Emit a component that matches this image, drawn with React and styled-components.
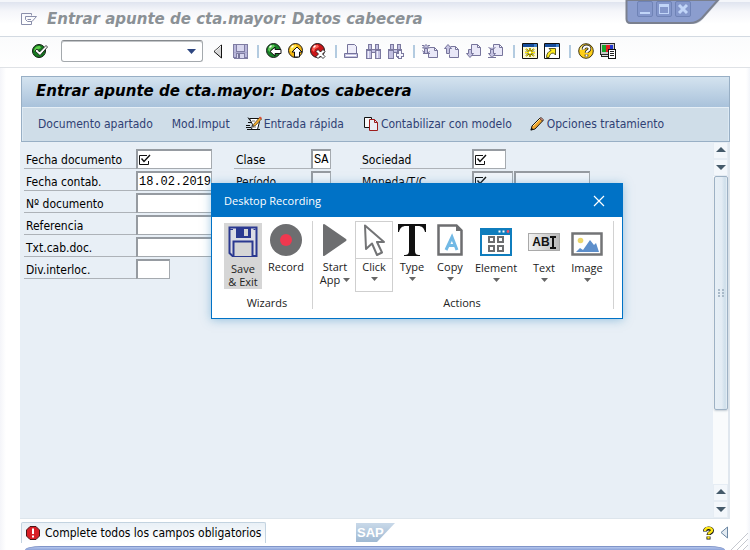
import React from "react";
import styled, { createGlobalStyle } from "styled-components";

const sapFont = '"DejaVu Sans Condensed", "DejaVu Sans", sans-serif';
const dialogFont = '"Open Sans", "Noto Sans", sans-serif';

const GlobalStyle = createGlobalStyle`
  *, *::before, *::after { box-sizing: border-box; }
  body { margin: 0; background: #fdfdfe; color: #000; font: 12px/16px ${sapFont}; }
  button, input { font: inherit; color: inherit; margin: 0; }
  svg { display: block; flex: none; }
  h1, h2, h3 { margin: 0; }
`;

/* ---------- Window ---------- */

const Window = styled.div`
  position: relative;
  display: flex;
  flex-direction: column;
  min-height: 100vh;
  overflow: hidden;
  background: linear-gradient(90deg, #f4f5f9 0, #ffffff 6px, #ffffff calc(100% - 4px), #f3f5fa 100%);
`;

const TitleBar = styled.header`
  display: flex;
  align-items: center;
  gap: 10px;
  height: 37px;
  padding: 0 21px;
  border-top: 2px solid #f4f6fa;
  border-bottom: 1px solid #d3dae2;
  background: linear-gradient(#dfe4ef 0, #f5f6fa 9px, #ffffff 22px);
`;

const Title = styled.h1`
  font-family: "DejaVu Sans", sans-serif;
  font-size: 15px;
  line-height: 20px;
  font-weight: bold;
  font-style: italic;
  color: ${(p) => (p.$muted ? "#8b9196" : "#000")};
  white-space: nowrap;
`;

const WindowControls = styled.div`
  position: absolute;
  top: 0;
  right: 30px;
  width: 98px;
  height: 26px;
`;

const ControlRow = styled.div`
  position: absolute;
  top: 1px;
  left: 15px;
  display: flex;
  gap: 3px;
`;

const ControlButton = styled.button`
  width: 16px;
  height: 16px;
  padding: 0;
  border: 1px solid #6f83b6;
  border-radius: 2px;
  background: #8497cb;
`;

const Toolbar = styled.div`
  display: flex;
  align-items: center;
  height: 31px;
  padding: 0 0 2px 32px;
  border-bottom: 1px solid #dfe2e6;
  background: linear-gradient(#fafbfc, #ffffff);
`;

const ToolGroup = styled.div`
  display: flex;
  align-items: center;
  gap: ${(p) => p.$gap || 6}px;
  padding: 0 9px 0 ${(p) => (p.$ruled ? 7 : 10)}px;
  ${(p) => p.$ruled && "border-left: 2px solid #b3cbe0; height: 13px;"}
`;

const IconButton = styled.button`
  display: flex;
  padding: 0;
  border: 0;
  background: none;
`;

const CommandBox = styled.div`
  display: flex;
  align-items: center;
  width: 142px;
  height: 22px;
  margin: 0 10px 0 13px;
  padding-right: 6px;
  border: 1px solid #a4a9ad;
  border-top-color: #85898d;
  border-radius: 3px;
  box-shadow: inset 0 1px 0 #c2c5c8;
  background: #fff;

  input { flex: 1; min-width: 0; border: 0; outline: 0; background: none; }
`;

/* ---------- Screen panel ---------- */

const Screen = styled.main`
  flex: 1;
  display: flex;
  flex-direction: column;
  margin: 8px 20px 0;
`;

const PanelHead = styled.div`
  margin: 0 0 0 1px;
  border: 1px solid #98afc5;
  box-shadow: inset 1px 1px 0 #dce9f3, inset -1px 0 0 #dce9f3;
  background: #cfdde8;
`;

const PanelTitle = styled.div`
  display: flex;
  align-items: center;
  height: 31px;
  padding: 0 14px 3px;
  border-bottom: 1px solid #e6eff6;
  background: linear-gradient(#d4e3ef, #a9c2db);
`;

const Actions = styled.nav`
  display: flex;
  align-items: center;
  height: 33px;
  padding: 0 16px 2px;
`;

const ActionButton = styled.button`
  display: flex;
  align-items: center;
  gap: ${(p) => (p.$tight ? 2 : 3)}px;
  margin-right: ${(p) => p.$after || 0}px;
  padding: 0;
  border: 0;
  background: none;
  color: #2f4174;
  white-space: nowrap;
`;

const ScreenBody = styled.div`
  flex: 1;
  display: flex;
  justify-content: space-between;
  border-right: 2px solid #e0e7ee;
  border-bottom: 1px solid #dde5ec;
  background: #e8eff6;
`;

const Form = styled.form`
  display: grid;
  grid-template-columns: 210px 126px 240px;
  align-content: start;
  padding: 7px 4px;
`;

const Column = styled.div`
  display: flex;
  flex-direction: column;
  gap: 2px;
`;

const FieldRow = styled.div`
  display: flex;
  height: 20px;
`;

const FieldLabel = styled.label`
  width: ${(p) => (p.$short ? 77 : 112)}px;
  padding: 3px 2px 0;
  border-bottom: 1px solid #adb2b8;
  white-space: nowrap;
`;

const fieldWidths = { xs: 20, s: 34, m: 41, l: 76, xl: 90 };

const FieldBox = styled.span`
  display: flex;
  align-items: center;
  width: ${(p) => fieldWidths[p.$size]}px;
  margin-right: 1px;
  padding-left: 1px;
  border: 1px solid #a5aaaf;
  border-top: 2px solid #969ba1;
  border-left: 2px solid #969ba1;
  background: ${(p) => (p.$dim ? "#f0f4f9" : "#fff")};
  flex: none;

  input {
    flex: 1;
    width: 0;
    min-width: 0;
    padding: 0;
    border: 0;
    outline: 0;
    background: none;
    font: 12px/16px "Liberation Mono", monospace;
  }
`;

/* ---------- Scroll bar ---------- */

const ScrollBar = styled.div`
  display: flex;
  flex-direction: column;
  width: 15px;
  background: #f9fbfc;
`;

const ScrollButton = styled.button`
  display: flex;
  align-items: center;
  justify-content: center;
  height: 17px;
  padding: 0 0 2px;
  border: 1px solid #e6edf4;
  background: #f3f7fb;
  flex: none;
`;

const ScrollTrack = styled.div`
  flex: 1;
  padding-left: 1px;
`;

const ScrollThumb = styled.div`
  display: flex;
  align-items: center;
  justify-content: center;
  height: 76%;
  border: 1px solid #9db1c4;
  border-radius: 2px;
  box-shadow: 0 1px 2px #c3ccd4;
  background: linear-gradient(90deg, #e6eff6 0, #e3ecf4 55%, #cddeea 85%, #e8f0f6 100%);
`;

/* ---------- Status bar ---------- */

const StatusBar = styled.footer`
  display: grid;
  grid-template-columns: 1fr auto 1fr;
  align-items: center;
  height: 27px;
  padding: 0 21px;
`;

const StatusMessage = styled.div`
  display: flex;
  align-items: center;
  justify-self: start;
  gap: 5px;
  height: 21px;
  padding: 0 4px;
  border: 1px solid #c3d3e0;
  border-bottom: 0;
  border-radius: 2px 2px 0 0;
  background: linear-gradient(#e9f0f6, #ffffff);
  white-space: nowrap;
`;

const StatusTools = styled.div`
  display: flex;
  justify-self: end;
  align-items: center;
  gap: 6px;
`;

const BottomEdge = styled.div`
  height: 4px;
  margin: 0 25px;
  border-top: 1px solid #8095c9;
  border-radius: 16px 16px 0 0 / 4px 4px 0 0;
  background: linear-gradient(#b4c6ee, #8da3d8);
`;

const Grip = styled.div`
  position: absolute;
  right: 2px;
  bottom: 0;
`;

/* ---------- Recording dialog ---------- */

const Dialog = styled.section`
  position: absolute;
  top: 183px;
  left: 211px;
  width: 412px;
  border: 1px solid #0072c6;
  background: #fff;
  box-shadow: 0 1px 9px rgba(70, 150, 200, 0.5);
  color: #222;
  font: 11px/13px ${dialogFont};
`;

const DialogTitle = styled.div`
  display: flex;
  align-items: center;
  justify-content: space-between;
  height: 33px;
  padding: 0 17px 0 12px;
  background: #0072c6;
  color: #fff;

  h2 { font-size: 11px; font-weight: normal; }
`;

const Ribbon = styled.div`
  display: flex;
  height: 101px;
  padding: 3px 0 0 10px;
`;

const RibbonGroup = styled.div`
  display: flex;
  flex-direction: column;
  justify-content: space-between;
  height: 88px;
  margin-top: 1px;
  padding: 0 ${(p) => (p.$wide ? 4 : 2)}px 0 2px;
  border-right: 1px solid #d2d2d2;
`;

const RibbonItems = styled.div`
  display: flex;
  height: 72px;
`;

const GroupName = styled.h3`
  font-size: 11px;
  font-weight: normal;
  line-height: 12px;
  text-align: center;
`;

const RibbonButton = styled.button`
  display: flex;
  flex-direction: column;
  align-items: center;
  align-self: flex-start;
  width: ${(p) => p.$width || 38}px;
  height: ${(p) => (p.$active ? 66 : 71)}px;
  margin-top: ${(p) => (p.$active ? 2 : 0)}px;
  padding: 0;
  border: ${(p) => (p.$framed ? "1px solid #cfcfcf" : "0")};
  background: ${(p) => (p.$active ? "#d6d6d6" : "none")};
  white-space: nowrap;
`;

const RibbonPicture = styled.span`
  display: flex;
  align-items: flex-end;
  justify-content: center;
  width: 100%;
  height: ${(p) => (p.$framed ? 37 : 35)}px;
  margin-bottom: ${(p) => (p.$low ? 5 : p.$framed ? 1 : 4)}px;
  padding-bottom: ${(p) => (p.$framed ? 1 : 0)}px;
  border-bottom: ${(p) => (p.$framed ? "1px solid #cfcfcf" : "0")};
`;

const RibbonText = styled.span`
  display: flex;
  align-items: center;
  gap: 3px;
  height: 13px;
`;

const CaretSpace = styled.span`
  margin-top: 4px;
`;

/* ---------- Drawings ---------- */

const Svg = ({ w = 16, h = 16, children, ...rest }) => (
  <svg width={w} height={h} viewBox={`0 0 ${w} ${h}`} aria-hidden="true" {...rest}>{children}</svg>
);

const Ball = ({ fill, light }) => (
  <>
    <circle cx="7.5" cy="7.5" r="7" fill={fill} stroke="#1b1b1b" />
    <path d="M2 7a5 5 0 0 1 6-5l1 2-4 2-1 3z" fill={light} />
    <path d="M3.500 4.500l2-2" stroke="#fff" strokeWidth="1.400" />
  </>
);

const icons = {
  menu: (
    <Svg w={16} h={12} fill="none" stroke="#8a8fab">
      <path d="M10.500 2.500v-2H.500v11h10V9" />
      <path d="M4.500 3.500h11l-4.500 5H6.500l-2-2zM6.500 6.500H10" />
    </Svg>
  ),
  enter: (
    <Svg>
      <circle cx="7" cy="8" r="6.500" fill="#15791f" stroke="#101c10" />
      <path d="M2 8a5 5 0 0 1 6-5l1 2-4 2z" fill="#5dcc49" />
      <path d="M3 8l2-2 2.500 3L14 2.500l1.500 1.500L8 12.500z" fill="#fff" stroke="#111" strokeWidth=".8" />
    </Svg>
  ),
  caret: <Svg w={9} h={5}><path d="M0 0h9L4.500 5z" fill="#2d4680" /></Svg>,
  left: <Svg w={10} h={15}><path d="M8.500 1v13L1 7.500z" fill="#d6d6d6" stroke="#111" /><path d="M8 2L2 7.500" stroke="#fff" /></Svg>,
  save: (
    <Svg w={15} h={15} shapeRendering="crispEdges">
      <path d="M0 0h15v15H1l-1-1z" fill="#7f7da3" />
      <path d="M1 1h2v12H1zM12 1h2v12h-2z" fill="#b9b7db" />
      <path d="M4 1h7v6H4zM4 10h7v4H4z" fill="#d8d7ef" />
      <path d="M5 10h2v4H5z" fill="#77759a" />
      <path d="M1 8h13v1H1z" fill="#aaa8cc" />
    </Svg>
  ),
  back: <Svg><Ball fill="#188229" light="#62cb59" /><path d="M4 8.500l5-4.500v2.500h6v4H9V13z" fill="#fff" stroke="#111" /></Svg>,
  exit: <Svg><Ball fill="#f2b411" light="#ffe64d" /><path d="M9 4l5 5h-2.500v5h-5V9H4z" fill="#fff" stroke="#111" /></Svg>,
  cancel: (
    <Svg>
      <Ball fill="#c91518" light="#ff6257" />
      <path d="M6 8.500l2-2 2.500 2.500L13 6.500l2 2-2.500 2.500 2.500 2.500-2 2-2.500-2.500L8 15.500l-2-2 2.500-2.500z" fill="#fff" stroke="#111" strokeWidth=".8" />
    </Svg>
  ),
  print: (
    <Svg w={15} h={15} fill="#fff" stroke="#75739b">
      <path d="M3.500.500h7l2 2v7h-9z" fill="#eeedf9" /><path d="M.500 9.500h13v4H.500z" fill="#c5c3e2" /><path d="M2 11.500h10" stroke="#fff" />
    </Svg>
  ),
  find: (
    <Svg w={15} h={15} shapeRendering="crispEdges">
      <path d="M2 0h4v5h3V0h4v5h2v10H9V9H6v6H0V5h2z" fill="#7b799f" />
      <path d="M3 1h2v4H3zM10 1h2v4h-2zM1 7h4v7H1zM10 7h4v7h-4zM6 6h3v2H6z" fill="#c3c1e2" />
      <path d="M2 7h1v7H2zM11 7h1v7h-1z" fill="#eeeefb" />
    </Svg>
  ),
  findNext: (
    <Svg h={15} shapeRendering="crispEdges">
      <path d="M2 0h4v5h3V0h4v5h1v9H9V9H6v6H0V5h2z" fill="#7b799f" />
      <path d="M3 1h2v4H3zM10 1h2v4h-2zM1 7h4v7H1zM6 6h3v2H6z" fill="#c3c1e2" />
      <path d="M10 6h4v3h2v4h-2v2h-4v-2H8V9h2z" fill="#7b799f" />
      <path d="M11 7h2v3h2v2h-2v2h-2v-2H9v-2h2z" fill="#f6f6ff" />
    </Svg>
  ),
  star: (
    <Svg>
      <path d="M.500.500h15v15H.500z" fill="#fffbd0" stroke="#111" /><path d="M1 1h14v3H1z" fill="#164d9c" /><path d="M12 1h3v3h-3z" fill="#4082cc" />
      <path d="M8 5v9M3 9.500h10M4 6l8 7M12 6l-8 7" stroke="#262600" strokeWidth="1.600" />
      <path d="M8 5v9M3 9.500h10M4 6l8 7M12 6l-8 7" stroke="#ffec00" />
      <path d="M7 8.500h2v2H7z" fill="#fff" />
    </Svg>
  ),
  shortcut: (
    <Svg>
      <path d="M.500.500h15v15H.500z" fill="#fff" stroke="#111" /><path d="M1 1h14v3H1z" fill="#164d9c" /><path d="M12 1h3v3h-3z" fill="#4082cc" />
      <path d="M5 5.500h6.500V12l-2-2c-3 0-4 2-4.500 4.500H2.500c0-4 2-6 4.500-7z" fill="#ffec20" stroke="#333300" strokeWidth=".8" />
    </Svg>
  ),
  help: (
    <Svg>
      <circle cx="8" cy="8" r="7.300" fill="#ffcf18" stroke="#3e3616" />
      <path d="M3 7c0-3 3-4 4-4" stroke="#fff6a5" strokeWidth="2" fill="none" />
      <path d="M5.500 6.500c0-4 6-4 6-.8 0 2.300-3 2-3 4M8.500 11.500v2" stroke="#222" strokeWidth="3.600" fill="none" />
      <path d="M5.500 6.500c0-4 6-4 6-.8 0 2.300-3 2-3 4M8.500 11.500v2" stroke="#fff" strokeWidth="2" fill="none" />
    </Svg>
  ),
  layout: (
    <Svg shapeRendering="crispEdges">
      <path d="M0 0h15v12h-2v2H1v-2H0z" fill="#262626" /><path d="M1 1h13v10H1z" fill="#c9c9c9" />
      <path d="M2 2h4v7H2z" fill="#18a62b" /><path d="M6 2h4v7H6z" fill="#e41d23" /><path d="M10 2h3v7h-3z" fill="#2036cf" />
      <path d="M2 12h7v1H2z" fill="#ddd" /><path d="M8 6h8v10H8z" fill="#111" /><path d="M9 7h6v8H9z" fill="#fff" />
      <path d="M10 8h4v1h-4zM10 10h4v1h-4zM10 12h4v1h-4z" fill="#222" />
    </Svg>
  ),
  fastEntry: (
    <Svg>
      <path d="M3.500 2.500h10v3l-2 8h-6l1-5z" fill="#fff" stroke="#111" />
      <path d="M2 1.500l2 3M0 9.500h4M0 11.500h5M1 13.500h13M2 6.500h3" stroke="#111" fill="none" />
      <path d="M6 5h3M7 11h3" stroke="#777" />
      <path d="M7.500 8.500l6-7 2 1.500-6 6.500-2.500 1z" fill="#f4ad2e" stroke="#443013" strokeWidth=".7" /><path d="M13 2l1-1.500 2 1.500-1 1.500z" fill="#d84e35" />
    </Svg>
  ),
  copyDoc: (
    <Svg w={14} h={14}>
      <path d="M.500.500h7v10h-7z" fill="#f8f8f8" stroke="#111" /><path d="M5.500 2.500h5l3 3v8h-8z" fill="#e9eef5" stroke="#9d1c1c" /><path d="M10.500 2.500v3h3" fill="none" stroke="#9d1c1c" />
    </Svg>
  ),
  pencil: (
    <Svg w={14} h={14}>
      <path d="M1 13l1-4L10 1l3 2.500L5 12z" fill="#f1a72f" stroke="#1c1710" /><path d="M3 9l7-7" stroke="#ffe7a0" /><path d="M9.500 1.500L11 .500l2.500 2.200-1 1.300z" fill="#eda294" stroke="#1c1710" strokeWidth=".7" /><path d="M.500 13.500l1-3 2 2z" fill="#111" />
    </Svg>
  ),
  required: (
    <Svg w={12} h={12} fill="none" stroke="#111">
      <path d="M8 1.500H.500v9h9V7" /><path d="M2.500 4.500l2.500 3 6-6.500" strokeWidth="1.400" />
    </Svg>
  ),
  up: <Svg w={10} h={6}><path d="M5 0l5 5H0z" fill="#455a6a" /></Svg>,
  down: <Svg w={10} h={6}><path d="M0 1h10L5 6z" fill="#455a6a" /></Svg>,
  gripDots: <Svg w={6} h={9} shapeRendering="crispEdges"><path d="M0 0h2v2H0zM4 0h2v2H4zM0 3h2v2H0zM4 3h2v2H4zM0 6h2v2H0zM4 6h2v2H4z" fill="#a9bac9" /></Svg>,
  error: (
    <Svg w={14} h={14}>
      <path d="M4 .500h6L13.500 4v6L10 13.500H4L.500 10V4z" fill="#d91f26" stroke="#4c1517" /><path d="M6 2.500h2v5.500H6zM6 9.500h2v2H6z" fill="#fff" />
    </Svg>
  ),
  hint: (
    <Svg w={11} h={14}>
      <path d="M2 5.500c0-4 7-4 7-.8 0 2.300-3.500 2-3.500 4.300M5.500 10.500v3" fill="none" stroke="#111" strokeWidth="4" />
      <path d="M2 5c0-4 7-4 7-.8 0 2.300-3.500 2-3.500 4.300M5.500 10.500v2.200" fill="none" stroke="#ffe715" strokeWidth="2.400" />
    </Svg>
  ),
  collapse: <Svg w={9} h={13}><path d="M7.500 1v11L1 6.500z" fill="#e2eaf1" stroke="#6c87a3" /></Svg>,
};

const pageShapes = {
  first: (
    <>
      <path d="M7.500 3.500h5l3 3v7h-9V10M12.500 3.500v3h3" />
      <path d="M4 .500l3.500 3.500h-7zM.500 6.500L3 9.500H1M7.500 7.500L5 9.500h3M2.500 4.500h3v5h-3zM0 1.500h2M6 1.500h2" fill="#c6c4e2" />
    </>
  ),
  previous: (
    <>
      <path d="M6.500 2.500h5l3 3v8h-9v-3M11.500 2.500v3h3" />
      <path d="M4 .500L7.500 4.500h-2v5h-3v-5h-2z" fill="#c6c4e2" />
    </>
  ),
  next: (
    <>
      <path d="M5.500.500h6l3 3v8h-9zM11.500.500v3h3" />
      <path d="M2.500 5.500h3v4h2l-3.500 4-3.500-4h2z" fill="#c6c4e2" />
    </>
  ),
  last: (
    <>
      <path d="M5.500.500h6l3 3v8h-9zM11.500.500v3h3" />
      <path d="M.500 3.500l3.500 2 3.500-2M2.500 5.500h3v4h2l-3.500 4-3.500-4h2zM0 13.500h8" fill="#c6c4e2" />
    </>
  ),
};

const PageIcon = ({ kind }) => <Svg h={14} fill="#e9e8f8" stroke="#77759c">{pageShapes[kind]}</Svg>;

const SmallCaret = () => <Svg w={7} h={4}><path d="M0 0h7L3.500 4z" fill="#666" /></Svg>;

const pictures = {
  save: (
    <Svg w={30} h={32}>
      <path d="M1.500 1.500H28.500v28.500H4.500L1.500 27z" fill="#dcdce4" stroke="#2b3990" strokeWidth="2" />
      <path d="M8 1h15v11H8z" fill="#2b3990" /><path d="M16 3h4v7h-4z" fill="#d6d6d6" />
      <path d="M5.500 30V15.500h19V30" fill="#d6d6d6" stroke="#2b3990" strokeWidth="2" /><path d="M2 3.500h3M25.500 3.500h2" stroke="#2b3990" />
    </Svg>
  ),
  record: <Svg w={32} h={32}><circle cx="16" cy="16" r="16" fill="#6d6e70" /><circle cx="16" cy="16" r="6" fill="#f0384f" /></Svg>,
  play: <Svg w={24} h={32}><path d="M1 0q-1 0-1 1v30q0 2 2 .5L23 17q1-1 0-2L2 .500z" fill="#6d6e70" /></Svg>,
  click: <Svg w={24} h={33}><path d="M3 1.500l1 23.500 6-5.500 5 11.500 5-2.500-5-10.500h7z" fill="#fff" stroke="#737476" strokeWidth="2" strokeLinejoin="round" /></Svg>,
  type: (
    <Svg w={28} h={32}>
      <path d="M0 0h28v8h-1C26 4 24 2 20 2h-3v24c0 4 1 5 5 5v1H6v-1c4 0 5-1 5-5V2H8C4 2 2 4 1 8H0z" fill="#111" />
    </Svg>
  ),
  copy: (
    <Svg w={26} h={32}>
      <path d="M1.500 1.500h18l5 5v24h-23z" fill="#fff" stroke="#6d6e70" strokeWidth="2.500" /><path d="M19 1l6 6h-6z" fill="#6d6e70" />
      <path d="M9 26l6-13 5 13M11 21.500h7" fill="none" stroke="#72b9e5" strokeWidth="3" />
    </Svg>
  ),
  element: (
    <Svg w={32} h={28}>
      <path d="M1 1h30v26H1z" fill="#fff" stroke="#0f7dbd" strokeWidth="2" /><path d="M0 0h32v7H0z" fill="#0f7dbd" />
      <path d="M18.500 2.500h2v2h-2zM22.500 2.500h2v2h-2z" fill="#fff" /><circle cx="28" cy="3.500" r="1.400" fill="#f05368" />
      <path d="M9 9h5v5H9zM18 9h5v5h-5zM9 18h5v5H9zM18 18h5v5h-5z" fill="#fff" stroke="#6d6e70" strokeWidth="2" />
    </Svg>
  ),
  image: (
    <Svg w={32} h={24}>
      <path d="M1.500 1.500h29v21h-29z" fill="#fff" stroke="#737476" strokeWidth="2.500" /><circle cx="9.500" cy="8.500" r="2.800" fill="#ecd66b" />
      <path d="M5 20l4-4 3 2 7-10 4 5 2-2 3 9z" fill="#5d8fcb" />
    </Svg>
  ),
};

const TextTile = styled.span`
  display: flex;
  align-items: center;
  justify-content: center;
  width: 32px;
  height: 18px;
  margin-bottom: 5px;
  border: 1px solid #a9a9a9;
  background: linear-gradient(90deg, #f2f2f2, #b9b9b9);
  color: #111;
  font: bold 12px/16px "Liberation Sans", sans-serif;
`;

const IBeam = () => <Svg w={6} h={13}><path d="M0 1h6M0 12h6M3 1v11" stroke="#111" strokeWidth="2" /></Svg>;

/* ---------- Parts ---------- */

const Tool = ({ name, children }) => <IconButton type="button" aria-label={name}>{children}</IconButton>;

const Field = ({ id, label, short, boxes }) => (
  <FieldRow>
    <FieldLabel htmlFor={id} $short={short}>{label}</FieldLabel>
    {boxes.map(({ size, value, required, dim }, i) => (
      <FieldBox key={i} $size={size} $dim={dim}>
        {required && icons.required}
        <input id={i === 0 ? id : `${id}-${i}`} aria-label={i ? label : undefined} defaultValue={value} />
      </FieldBox>
    ))}
  </FieldRow>
);

const RibbonAction = ({ name, second, picture, width, active, framed, low, caret }) => (
  <RibbonButton type="button" $width={width} $active={active} $framed={framed}>
    <RibbonPicture $framed={framed} $low={low}>{picture}</RibbonPicture>
    <RibbonText>{name}</RibbonText>
    {second && <RibbonText>{second}{caret && <SmallCaret />}</RibbonText>}
    {caret && !second && <CaretSpace><SmallCaret /></CaretSpace>}
  </RibbonButton>
);

const title = "Entrar apunte de cta.mayor: Datos cabecera";

export default function App() {
  return (
    <>
      <GlobalStyle />
      <Window>
        <TitleBar>
          <Tool name="Menú">{icons.menu}</Tool>
          <Title $muted>{title}</Title>
        </TitleBar>
        <WindowControls>
          <Svg w={98} h={26}>
            <path d="M5 0v21q0 3 3 3h63q6 0 10-5L98 0z" fill="#cfd4df" />
            <path d="M4.500 0v19q0 4 4 4H68q7 0 12-5L96 0z" fill="#8b9dce" stroke="#7a808f" strokeWidth="2" />
          </Svg>
          <ControlRow>
            <ControlButton aria-label="Minimizar"><Svg w={14} h={14}><path d="M2 10h10v2H2z" fill="#c1d5f8" /></Svg></ControlButton>
            <ControlButton aria-label="Maximizar"><Svg w={14} h={14}><path d="M2 2h10v10H2zM3 5v6h8V5z" fillRule="evenodd" fill="#c1d5f8" /></Svg></ControlButton>
            <ControlButton aria-label="Cerrar"><Svg w={14} h={14}><path d="M3 3l8 8M11 3l-8 8" stroke="#c1d5f8" strokeWidth="3" /></Svg></ControlButton>
          </ControlRow>
        </WindowControls>

        <Toolbar>
          <Tool name="Aceptar">{icons.enter}</Tool>
          <CommandBox><input aria-label="Comando" />{icons.caret}</CommandBox>
          <Tool name="Ocultar">{icons.left}</Tool>
          <ToolGroup><Tool name="Grabar">{icons.save}</Tool></ToolGroup>
          <ToolGroup $ruled>
            <Tool name="Atrás">{icons.back}</Tool>
            <Tool name="Finalizar">{icons.exit}</Tool>
            <Tool name="Cancelar">{icons.cancel}</Tool>
          </ToolGroup>
          <ToolGroup $ruled $gap={7}>
            <Tool name="Imprimir">{icons.print}</Tool>
            <Tool name="Buscar">{icons.find}</Tool>
            <Tool name="Seguir buscando">{icons.findNext}</Tool>
          </ToolGroup>
          <ToolGroup $ruled>
            <Tool name="Primera página"><PageIcon kind="first" /></Tool>
            <Tool name="Página anterior"><PageIcon kind="previous" /></Tool>
            <Tool name="Página siguiente"><PageIcon kind="next" /></Tool>
            <Tool name="Última página"><PageIcon kind="last" /></Tool>
          </ToolGroup>
          <ToolGroup $ruled>
            <Tool name="Nuevo modo">{icons.star}</Tool>
            <Tool name="Acceso directo">{icons.shortcut}</Tool>
          </ToolGroup>
          <ToolGroup $ruled>
            <Tool name="Ayuda">{icons.help}</Tool>
            <Tool name="Diseño local">{icons.layout}</Tool>
          </ToolGroup>
        </Toolbar>

        <Screen>
          <PanelHead>
            <PanelTitle><Title as="h2">{title}</Title></PanelTitle>
            <Actions>
              <ActionButton $after={19}>Documento apartado</ActionButton>
              <ActionButton $after={16}>Mod.Imput</ActionButton>
              <ActionButton $after={20} $tight>{icons.fastEntry}Entrada rápida</ActionButton>
              <ActionButton $after={18}>{icons.copyDoc}Contabilizar con modelo</ActionButton>
              <ActionButton>{icons.pencil}Opciones tratamiento</ActionButton>
            </Actions>
          </PanelHead>
          <ScreenBody>
            <Form>
              <Column>
                <Field id="docdate" label="Fecha documento" boxes={[{ size: "l", required: true }]} />
                <Field id="postdate" label="Fecha contab." boxes={[{ size: "l", value: "18.02.2019" }]} />
                <Field id="docno" label="Nº documento" boxes={[{ size: "xl" }]} />
                <Field id="ref" label="Referencia" boxes={[{ size: "xl" }]} />
                <Field id="text" label="Txt.cab.doc." boxes={[{ size: "xl" }]} />
                <Field id="partner" label="Div.interloc." boxes={[{ size: "s" }]} />
              </Column>
              <Column>
                <Field id="class" label="Clase" short boxes={[{ size: "xs", value: "SA" }]} />
                <Field id="period" label="Período" short boxes={[{ size: "xs", dim: true }]} />
              </Column>
              <Column>
                <Field id="company" label="Sociedad" boxes={[{ size: "s", required: true }]} />
                <Field id="currency" label="Moneda/T/C" boxes={[{ size: "m", required: true, dim: true }, { size: "l", dim: true }]} />
              </Column>
            </Form>
            <ScrollBar>
              <ScrollButton aria-label="Línea arriba">{icons.up}</ScrollButton>
              <ScrollButton aria-label="Línea abajo">{icons.down}</ScrollButton>
              <ScrollTrack><ScrollThumb>{icons.gripDots}</ScrollThumb></ScrollTrack>
              <ScrollButton aria-label="Página arriba">{icons.up}</ScrollButton>
              <ScrollButton aria-label="Página abajo">{icons.down}</ScrollButton>
            </ScrollBar>
          </ScreenBody>
        </Screen>

        <StatusBar>
          <StatusMessage role="status">{icons.error}Complete todos los campos obligatorios</StatusMessage>
          <svg width="39" height="19" viewBox="0 0 39 19" role="img" aria-label="SAP">
            <defs>
              <linearGradient id="logo" x1="0" y1="0" x2="0" y2="1">
                <stop offset="0" stopColor="#c9d9e9" /><stop offset="1" stopColor="#9fb9d3" />
              </linearGradient>
            </defs>
            <path d="M0 0h39L21 19H0z" fill="url(#logo)" />
            <text x="1" y="14" fontFamily="Liberation Sans, sans-serif" fontSize="13" fontWeight="bold" fill="#fff">SAP</text>
          </svg>
          <StatusTools>
            <Tool name="Ayuda de mensaje">{icons.hint}</Tool>
            <Tool name="Mostrar estado">{icons.collapse}</Tool>
          </StatusTools>
        </StatusBar>
        <BottomEdge />
        <Grip><Svg w={18} h={18}><path d="M1 18L18 1M7 18L18 7M13 18l5-5" stroke="#c5c8cf" /></Svg></Grip>

        <Dialog role="dialog" aria-labelledby="recording">
          <DialogTitle>
            <h2 id="recording">Desktop Recording</h2>
            <Tool name="Close"><Svg w={12} h={12}><path d="M1 1l10 10M11 1L1 11" stroke="#fff" strokeWidth="1.200" /></Svg></Tool>
          </DialogTitle>
          <Ribbon>
            <RibbonGroup>
              <RibbonItems>
                <RibbonAction name="Save" second="& Exit" picture={pictures.save} active />
                <RibbonAction name="Record" picture={pictures.record} width={48} />
              </RibbonItems>
              <GroupName>Wizards</GroupName>
            </RibbonGroup>
            <RibbonGroup $wide>
              <RibbonItems>
                <RibbonAction name="Start" second="App" caret picture={pictures.play} width={40} />
                <RibbonAction name="Click" caret framed picture={pictures.click} />
                <RibbonAction name="Type" caret picture={pictures.type} />
                <RibbonAction name="Copy" caret picture={pictures.copy} />
                <RibbonAction name="Element" caret low picture={pictures.element} width={54} />
                <RibbonAction name="Text" caret low picture={<TextTile>AB<IBeam /></TextTile>} width={42} />
                <RibbonAction name="Image" caret low picture={pictures.image} width={44} />
              </RibbonItems>
              <GroupName>Actions</GroupName>
            </RibbonGroup>
          </Ribbon>
        </Dialog>
      </Window>
    </>
  );
}
